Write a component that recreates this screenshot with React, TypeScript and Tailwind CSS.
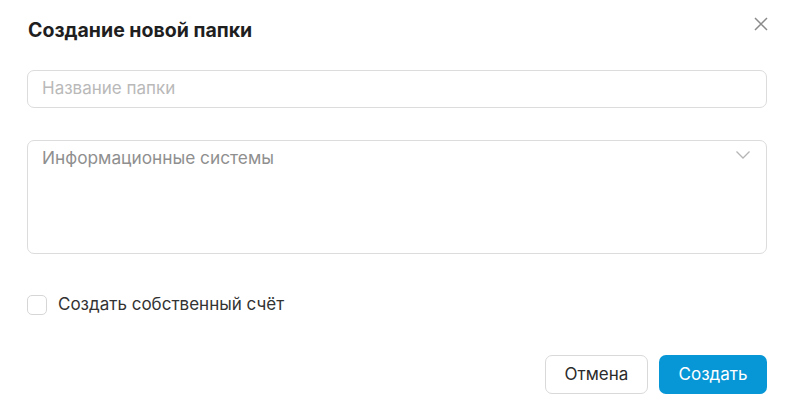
import React from "react";

export default function App() {
  return (
    <div
      className="w-[791px] h-[413px] bg-white relative"
      style={{ fontFamily: "Inter, 'Liberation Sans', Arial, sans-serif" }}
    >
      <div className="pl-[27px] pr-[24px] pt-[18px]">
        <div className="flex items-center justify-between h-[24px]">
          <h1 className="text-[19.5px] leading-[24px] font-bold text-[#1f1f1f] pl-[1px]">
            Создание новой папки
          </h1>
          <button className="w-[14px] h-[14px] mr-[-1px] mt-[-12px] text-[#8a8a8a]">
            <svg width="14" height="14" viewBox="0 0 14 14" fill="none" stroke="currentColor" strokeWidth="1.5">
              <path d="M1 1L13 13M13 1L1 13" />
            </svg>
          </button>
        </div>
        <div className="mt-[28px] h-[38px] border border-[#dcdcdc] rounded-[7px] flex items-center px-[14px]">
          <span className="text-[17px] text-[#b9b9b9]">Название папки</span>
        </div>
        <div className="mt-[32px] h-[114px] border border-[#dcdcdc] rounded-[7px] relative px-[14px] pt-[5px]">
          <span className="text-[17.3px] leading-[22px] text-[#8f8f8f]">Информационные системы</span>
          <svg className="absolute right-[16px] top-[10px]" width="14" height="8" viewBox="0 0 14 8" fill="none" stroke="#b5b5b5" strokeWidth="1.3">
            <path d="M0.5 0.5L7 7L13.5 0.5" />
          </svg>
        </div>
        <div className="mt-[41px] flex items-center h-[20px]">
          <div className="w-[20px] h-[20px] border border-[#d6d6d6] rounded-[5px]" />
          <span className="ml-[11px] text-[17px] text-[#333333]">Создать собственный счёт</span>
        </div>
        <div className="mt-[40px] flex justify-end gap-[11px]">
          <button className="w-[103px] h-[39px] border border-[#d9d9d9] rounded-[7px] text-[17px] text-[#2b2b2b] bg-white">
            Отмена
          </button>
          <button className="w-[108px] h-[39px] rounded-[7px] text-[17px] text-white bg-[#0897d6]">
            Создать
          </button>
        </div>
      </div>
    </div>
  );
}
